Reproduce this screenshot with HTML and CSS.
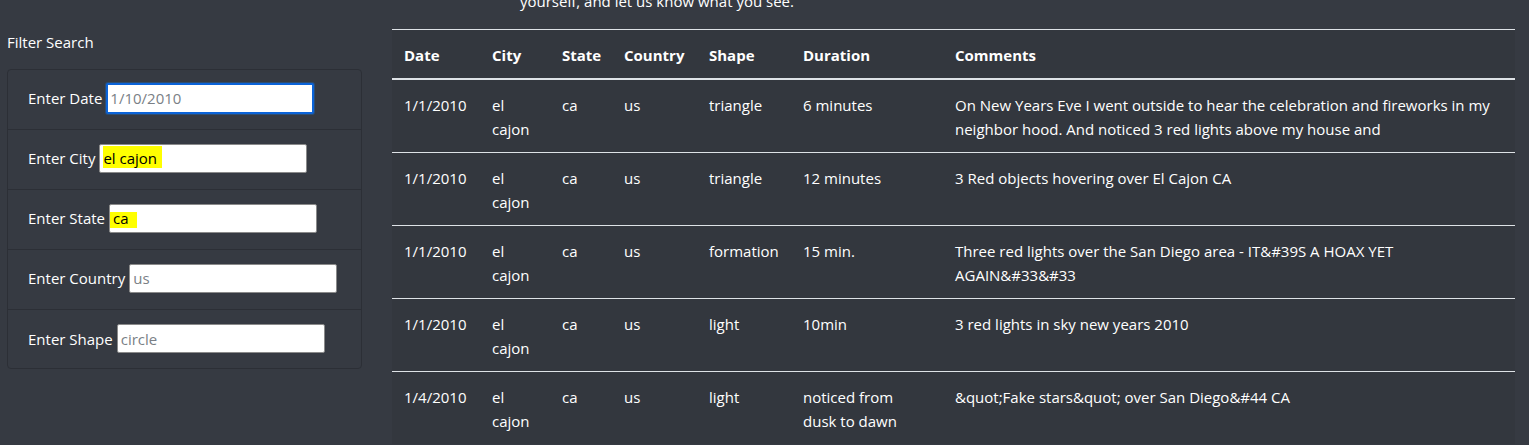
FILE: index.html
```html
<!DOCTYPE html>
<html lang="en">
<head>
<meta charset="utf-8">
<title>UFO Sightings</title>
<link rel="stylesheet" href="styles.css">
</head>
<body>
<div class="page">
  <aside class="filters">
    <div class="filter-title">Filter Search</div>
    <ul class="filter-card">
      <li class="filter-item"><label for="datetime">Enter Date</label> <input id="datetime" class="field focused" type="text" placeholder="1/10/2010"></li>
      <li class="filter-item"><label for="city">Enter City</label> <input id="city" class="field hl-city" type="text" value="el cajon"></li>
      <li class="filter-item"><label for="state">Enter State</label> <input id="state" class="field hl-state" type="text" value="ca"></li>
      <li class="filter-item"><label for="country">Enter Country</label> <input id="country" class="field" type="text" placeholder="us"></li>
      <li class="filter-item"><label for="shape">Enter Shape</label> <input id="shape" class="field" type="text" placeholder="circle"></li>
    </ul>
  </aside>
  <main class="results">
    <p class="intro">yourself, and let us know what you see.</p>
    <table class="sightings">
      <colgroup>
        <col class="c-date"><col class="c-city"><col class="c-state"><col class="c-country"><col class="c-shape"><col class="c-duration"><col class="c-comments">
      </colgroup>
      <thead>
        <tr><th>Date</th><th>City</th><th>State</th><th>Country</th><th>Shape</th><th>Duration</th><th>Comments</th></tr>
      </thead>
      <tbody>
        <tr><td>1/1/2010</td><td>el cajon</td><td>ca</td><td>us</td><td>triangle</td><td>6 minutes</td><td>On New Years Eve I went outside to hear the celebration and fireworks in my neighbor hood. And noticed 3 red lights above my house and</td></tr>
        <tr><td>1/1/2010</td><td>el cajon</td><td>ca</td><td>us</td><td>triangle</td><td>12 minutes</td><td>3 Red objects hovering over El Cajon CA</td></tr>
        <tr><td>1/1/2010</td><td>el cajon</td><td>ca</td><td>us</td><td>formation</td><td>15 min.</td><td>Three red lights over the San Diego area - IT&amp;#39S A HOAX YET AGAIN&amp;#33&amp;#33</td></tr>
        <tr><td>1/1/2010</td><td>el cajon</td><td>ca</td><td>us</td><td>light</td><td>10min</td><td>3 red lights in sky new years 2010</td></tr>
        <tr><td>1/4/2010</td><td>el cajon</td><td>ca</td><td>us</td><td>light</td><td>noticed from dusk to dawn</td><td>&amp;quot;Fake stars&amp;quot; over San Diego&amp;#44 CA</td></tr>
      </tbody>
    </table>
  </main>
</div>
</body>
</html>
```

FILE: styles.css
```css
* { box-sizing: border-box; }

html, body {
  margin: 0;
  padding: 0;
  background: #363a42;
  color: #ffffff;
  font-family: "Open Sans", "Noto Sans", "Liberation Sans", sans-serif;
  font-size: 15px;
  line-height: 24px;
  overflow: hidden;
}

.page {
  display: flex;
  align-items: flex-start;
  gap: 30px;
  padding: 0 14px 0 7px;
}

.filters {
  flex: 0 0 355px;
  padding-top: 30px;
}

.filter-title {
  line-height: 24px;
  margin-bottom: 15px;
}

.filter-card {
  list-style: none;
  margin: 0;
  padding: 0;
  border: 1px solid #2c2f36;
  border-radius: 4px;
}

.filter-item {
  display: flex;
  align-items: center;
  gap: 4px;
  height: 60px;
  padding: 0 20px 3px;
  border-top: 1px solid #2c2f36;
}
.filter-item:first-child { border-top: 0; height: 59px; }
.filter-item:last-child { height: 59px; padding-bottom: 1px; }

.filter-item label { white-space: nowrap; }

.field {
  width: 208px;
  height: 29px;
  padding: 0 3px;
  border: 1px solid #8a8a8a;
  border-radius: 2px;
  background: #ffffff;
  color: #000000;
  font-family: inherit;
  font-size: 15px;
  outline: none;
}
.field::placeholder { color: #7a7f86; }

.field.focused {
  height: 31px;
  border: 2px solid #0b63d8;
  box-shadow: 0 0 0 1px #2c4d73;
  padding-left: 2px;
}

.hl-city {
  background: linear-gradient(#ffff00, #ffff00) no-repeat 3px 1px / 59px 22px, #ffffff;
}
.hl-state {
  background: linear-gradient(#ffff00, #ffff00) no-repeat 0px 7px / 27px 16px, #ffffff;
}

.results {
  flex: 1 1 auto;
  min-width: 0;
}

.intro {
  margin: -11px 0 16px 0;
  padding-left: 128px;
  line-height: 24px;
}

.sightings {
  width: 100%;
  table-layout: fixed;
  border-collapse: collapse;
  background: #33373e;
}

.c-date { width: 88px; }
.c-city { width: 70px; }
.c-state { width: 62px; }
.c-country { width: 85px; }
.c-shape { width: 94px; }
.c-duration { width: 152px; }
.c-comments { width: auto; }

.sightings th,
.sightings td {
  padding: 13px 12px 11px;
  text-align: left;
  vertical-align: top;
  line-height: 24px;
}

.sightings td:nth-child(6) { padding-right: 30px; }

.sightings th {
  font-weight: 700;
  border-top: 1px solid #dee2e6;
  border-bottom: 2px solid #dee2e6;
}

.sightings td {
  border-top: 1px solid #dee2e6;
}
.sightings tbody tr:first-child td { border-top: 0; }
```
